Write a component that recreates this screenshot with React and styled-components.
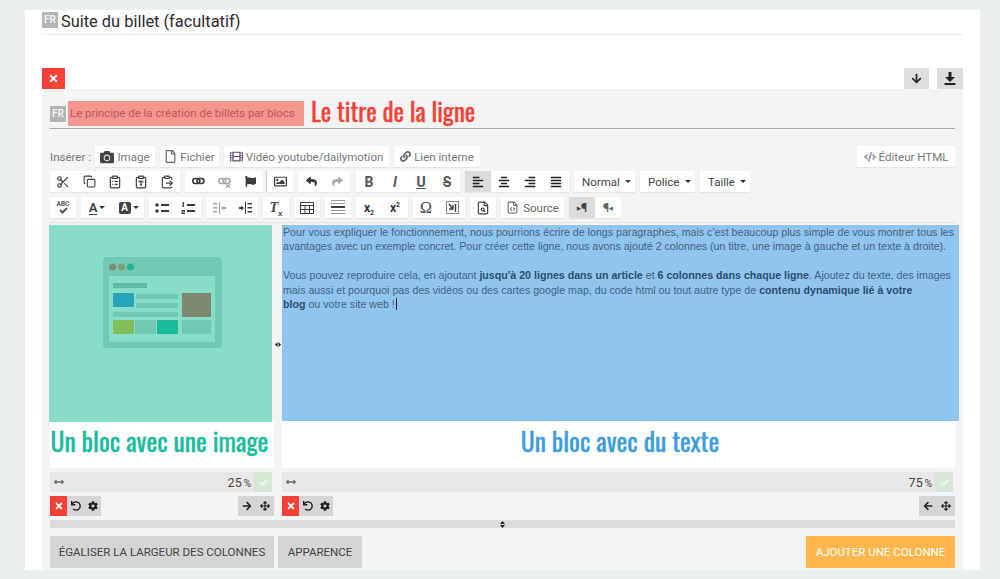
import React from "react";
import styled, { createGlobalStyle } from "styled-components";
import {
  FaTimes, FaArrowDown, FaArrowRight, FaArrowLeft, FaCamera, FaRegFile, FaFilm, FaLink, FaCode,
  FaFlag, FaRegImage, FaReply, FaShare, FaAlignLeft, FaAlignCenter, FaAlignRight, FaAlignJustify,
  FaCheck, FaUndo, FaCog, FaArrowsAlt, FaArrowsAltH,
} from "react-icons/fa";
import { Scissors, Copy, ClipboardList, ClipboardType, ClipboardPaste, FileSearch, FileCode } from "lucide-react";

const GlobalStyle = createGlobalStyle`
  html, body {
    margin: 0;
    padding: 0;
    height: 100%;
    overflow: hidden;
    background: #ebeff0;
    font-family: Roboto, "Liberation Sans", sans-serif;
  }
`;

const Page = styled.div`
  padding-top: 10px;
`;
const Card = styled.div`
  width: 955px;
  height: 560px;
  margin-left: 25px;
  padding: 0 17px;
  box-sizing: border-box;
  background: #fff;
`;
const Heading = styled.div`
  display: flex;
  align-items: flex-start;
  gap: 3px;
  height: 25px;
  padding-top: 2px;
  box-sizing: border-box;
  border-bottom: 1px solid #eaeaea;
  font-size: 16.4px;
  line-height: 19px;
  color: #2b2b2b;
`;
const Flag = styled.span`
  display: inline-flex;
  align-items: center;
  justify-content: center;
  flex: none;
  width: 16px;
  height: 16px;
  background: #b4b4b4;
  color: #f2f2f2;
  font-size: 10px;
  font-weight: 700;
  line-height: 1;
`;
const Actions = styled.div`
  display: flex;
  justify-content: space-between;
  align-items: flex-end;
  margin-top: 33px;
  height: 21px;
`;
const ActionsRight = styled.div`
  display: flex;
  gap: 8px;
`;
const Square = styled.button`
  display: flex;
  align-items: center;
  justify-content: center;
  width: ${(p) => p.$w || 25}px;
  height: 21px;
  padding: 0;
  border: 0;
  background: ${(p) => (p.$danger ? "#f44336" : "#dedede")};
  color: ${(p) => (p.$danger ? "#fff" : "#222")};
  font-size: 11px;
`;
const Panel = styled.div`
  height: 481px;
  padding: 12px 8px 0;
  box-sizing: border-box;
  background: #f4f4f4;
`;
const TitleRow = styled.div`
  display: flex;
  align-items: center;
  height: 25px;
  padding-bottom: 2px;
  border-bottom: 1px solid #aaa;
`;
const TitleInput = styled.div`
  width: 236px;
  height: 25px;
  margin-left: 2px;
  padding-left: 2px;
  box-sizing: border-box;
  background: #f5958f;
  color: #bf5a58;
  font-size: 11.4px;
  line-height: 25px;
  white-space: nowrap;
`;
const Display = styled.span`
  display: inline-block;
  font-family: Oswald, "Liberation Sans Narrow", "DejaVu Sans Condensed", sans-serif;
  font-size: ${(p) => p.$size || 25.6}px;
  line-height: 32px;
  color: ${(p) => p.$color};
  white-space: nowrap;
  -webkit-text-stroke: 0.3px ${(p) => p.$color};
`;
const RedTitle = styled(Display)`
  margin: -6px 0 0 7px;
`;
const InsertRow = styled.div`
  display: flex;
  align-items: center;
  gap: 5px;
  height: 21px;
  margin-top: 17px;
  font-size: 11.5px;
  color: #777;
`;
const InsertLabel = styled.span`
  width: 40px;
  white-space: nowrap;
`;
const InsertBtn = styled.div`
  display: flex;
  align-items: center;
  justify-content: center;
  gap: 3px;
  width: ${(p) => p.$w}px;
  height: 21px;
  margin-left: ${(p) => (p.$auto ? "auto" : "0")};
  background: #fff;
  box-shadow: 0 1px 1px rgba(0, 0, 0, 0.06);
  font-size: 11.5px;
  color: #777;
  svg {
    color: ${(p) => p.$iconColor || "#666"};
    flex: none;
  }
`;
const ToolRow = styled.div`
  display: flex;
  gap: 5px;
  height: 21px;
  margin-top: ${(p) => p.$top}px;
`;
const Group = styled.div`
  display: flex;
  margin-left: ${(p) => p.$shift || 0}px;
  background: #fff;
  box-shadow: 0 1px 1px rgba(0, 0, 0, 0.06);
  border-left: ${(p) => (p.$sep ? "1px solid #ccc" : "0")};
`;
const Tool = styled.div`
  display: flex;
  align-items: center;
  justify-content: center;
  gap: 2px;
  width: ${(p) => p.$w || 26}px;
  height: 21px;
  background: ${(p) => (p.$active ? "#dcdcdc" : "transparent")};
  color: ${(p) => (p.$dim ? "#aaa" : "#3c3c3c")};
  font-size: 12px;
`;
const Caret = styled.span`
  display: inline-block;
  width: 0;
  height: 0;
  border-top: 3px solid #333;
  border-left: 3px solid transparent;
  border-right: 3px solid transparent;
`;
const Combo = styled.div`
  display: flex;
  align-items: center;
  justify-content: space-between;
  width: ${(p) => p.$w}px;
  height: 21px;
  padding: 0 4px 0 8px;
  box-sizing: border-box;
  background: #fff;
  box-shadow: 0 1px 1px rgba(0, 0, 0, 0.06);
  font-size: 11.5px;
  color: #444;
`;
const SourceTool = styled(Tool)`
  width: 63px;
  gap: 4px;
  font-size: 11.5px;
  color: #666;
`;
const LetterA = styled.span`
  font-weight: 700;
  font-size: 13px;
  line-height: 13px;
  color: #444;
  border-bottom: 1px solid #444;
`;
const BoxA = styled.span`
  display: inline-flex;
  align-items: center;
  justify-content: center;
  width: 12px;
  height: 12px;
  border-radius: 2px;
  background: #444;
  color: #fff;
  font-size: 10px;
  font-weight: 700;
`;
const Format = styled.span`
  font-size: 14px;
  font-weight: 700;
  line-height: 1;
  color: #555;
  font-style: ${(p) => (p.$italic ? "italic" : "normal")};
  text-decoration: ${(p) => p.$line || "none"};
`;
const Script = styled.span`
  font-size: 12px;
  font-weight: 700;
  color: #333;
  sub, sup {
    font-size: 7px;
    line-height: 0;
  }
`;
const SpellMark = styled.span`
  display: flex;
  flex-direction: column;
  align-items: center;
  font-size: 6.5px;
  font-weight: 700;
  line-height: 6px;
  color: #555;
`;
const ClearFormat = styled.span`
  font-family: "Liberation Serif", serif;
  font-style: italic;
  font-weight: 700;
  font-size: 14px;
  color: #444;
  sub {
    font-family: "Liberation Sans", sans-serif;
    font-style: normal;
    font-size: 8px;
    line-height: 0;
  }
`;
const Pilcrow = styled.span`
  font-size: 13px;
  font-weight: 700;
  color: ${(p) => p.$color || "#444"};
  i {
    font-size: 5px;
    font-style: normal;
    vertical-align: 2px;
  }
`;
const Omega = styled.span`
  font-family: "Liberation Serif", serif;
  font-size: 16px;
  color: #444;
`;
const Divider = styled.div`
  height: 1px;
  margin-top: 4px;
  background: #e4e4e4;
`;
const Columns = styled.div`
  display: flex;
  margin-left: -1px;
  margin-top: 2px;
`;
const Column = styled.div`
  display: flex;
  flex-direction: column;
  flex: none;
  width: ${(p) => p.$w}px;
`;
const Gutter = styled.div`
  flex: none;
  display: flex;
  align-items: flex-start;
  justify-content: center;
  width: 8px;
  padding-top: 117px;
  color: #222;
`;
const ImageBlock = styled.div`
  display: flex;
  align-items: center;
  justify-content: center;
  width: 223px;
  height: 197px;
  padding: 0 0 42px 4px;
  box-sizing: border-box;
  background: #87ddc8;
`;
const TextBlock = styled.div`
  height: 196px;
  padding: 0 3px 0 1px;
  box-sizing: border-box;
  background: #8fc5ee;
  font-family: "Liberation Sans", Arial, sans-serif;
  font-size: 10.65px;
  line-height: 14.4px;
  color: #3f6385;
  b {
    color: #2a4d70;
  }
`;
const Cursor = styled.span`
  display: inline-block;
  width: 1px;
  height: 12px;
  margin-left: 1px;
  vertical-align: -2px;
  background: #222;
`;
const Caption = styled.div`
  display: flex;
  justify-content: center;
  align-items: center;
  height: ${(p) => p.$h}px;
  margin-left: ${(p) => p.$left || 0}px;
  width: ${(p) => p.$w}px;
  padding: 0 ${(p) => p.$padRight || 0}px 10px ${(p) => p.$pad || 0}px;
  box-sizing: border-box;
  background: #fff;
`;
const SizeBar = styled.div`
  display: flex;
  align-items: center;
  width: ${(p) => p.$w}px;
  height: 20px;
  margin-top: 4px;
  margin-left: ${(p) => p.$left || 0}px;
  padding-left: 4px;
  box-sizing: border-box;
  background: #e8e8e8;
  font-size: 12.5px;
  color: #444;
  > svg {
    color: #666;
  }
`;
const Percent = styled.span`
  margin-left: auto;
  margin-right: 3px;
  small {
    font-size: 10px;
    margin-left: 2px;
  }
`;
const Apply = styled.span`
  display: flex;
  align-items: center;
  justify-content: center;
  width: 18px;
  height: 20px;
  background: #d5e8d4;
  color: #f2f7f1;
  font-size: 9px;
`;
const BlockTools = styled.div`
  display: flex;
  justify-content: space-between;
  width: ${(p) => p.$w}px;
  height: 20px;
  margin-top: 4px;
  margin-left: ${(p) => p.$left || 0}px;
`;
const ToolSet = styled.div`
  display: flex;
  background: #d5d5d5;
`;
const MiniBtn = styled.span`
  display: flex;
  align-items: center;
  justify-content: center;
  width: ${(p) => p.$w || 17}px;
  height: 20px;
  background: ${(p) => (p.$danger ? "#f44336" : "transparent")};
  color: ${(p) => (p.$danger ? "#fff" : "#222")};
  font-size: 10px;
`;
const RowHandle = styled.div`
  display: flex;
  align-items: center;
  justify-content: center;
  height: 8px;
  margin-top: 4px;
  background: #dcdcdc;
  color: #222;
`;
const Footer = styled.div`
  display: flex;
  gap: 4px;
  margin-top: 8px;
`;
const FooterBtn = styled.button`
  width: ${(p) => p.$w}px;
  height: 32px;
  margin-left: ${(p) => (p.$auto ? "auto" : "0")};
  padding: 0;
  border: 0;
  background: ${(p) => (p.$accent ? "#ffb74d" : "#d5d5d5")};
  color: ${(p) => (p.$accent ? "#fff" : "#444")};
  font-family: Roboto, sans-serif;
  font-size: 11.5px;
  text-transform: uppercase;
`;

const DownloadIcon = () => (
  <svg width="12" height="13" viewBox="0 0 12 13" fill="currentColor">
    <path d="M4.500 0h3v5H11L6 10 1 5h3.500z" />
    <rect x="0.500" y="11" width="11" height="2" />
  </svg>
);

const Svg14 = ({ children, w = 14, h = 14 }) => (
  <svg width={w} height={h} viewBox={`0 0 ${w} ${h}`} fill="currentColor">
    {children}
  </svg>
);

const RuleIcon = () => (
  <Svg14 h={15}>
    <rect y="0" width="14" height="1" opacity="0.55" />
    <rect y="3" width="14" height="1" opacity="0.55" />
    <rect y="6" width="14" height="2" />
    <rect y="10" width="14" height="1" opacity="0.55" />
    <rect y="13" width="14" height="1" opacity="0.55" />
  </Svg14>
);

const ChainIcon = ({ broken }) => (
  <svg width="13" height="13" viewBox="0 0 13 13" fill="none" stroke="currentColor" strokeWidth="1.600">
    <rect x="0.800" y="3.500" width="7" height="5" rx="2.500" />
    <rect x="5" y="3.500" width="7" height="5" rx="2.500" />
    {broken && <path d="M8 9l4 4M12 9l-4 4" strokeWidth="1.200" />}
  </svg>
);

const BulletIcon = () => (
  <Svg14 h={10}>
    <circle cx="2" cy="2" r="1.800" />
    <circle cx="2" cy="8" r="1.800" />
    <rect x="6" y="1" width="8" height="2" />
    <rect x="6" y="7" width="8" height="2" />
  </Svg14>
);

const NumberIcon = () => (
  <Svg14 h={12}>
    <rect x="1.500" y="0" width="1.400" height="5" />
    <path d="M0.500 8h3.500v2H2v.8h2V12H0.500v-2.600h2v-.4H.5z" />
    <rect x="6" y="2" width="8" height="2" />
    <rect x="6" y="8" width="8" height="2" />
  </Svg14>
);

const IndentIcon = ({ flip }) => (
  <Svg14 w={13} h={12}>
    <g transform={flip ? "translate(13 0) scale(-1 1)" : undefined}>
      <path d="M0 5h2.500V3.500L5 6 2.500 8.500V7H0z" />
      <rect x="6" y="0" width="1" height="12" />
      <rect x="8.500" y="1" width="4.500" height="1.500" />
      <rect x="8.500" y="5" width="4.500" height="1.500" />
      <rect x="8.500" y="9" width="4.500" height="1.500" />
    </g>
  </Svg14>
);

const GridIcon = () => (
  <svg width="14" height="12" viewBox="0 0 14 12" fill="none" stroke="currentColor" strokeWidth="1">
    <rect x="0.500" y="0.500" width="13" height="11" />
    <path d="M0 3.500h14M0 7.500h14M5 3v9M9.500 3v9" />
  </svg>
);

const FrameIcon = () => (
  <svg width="13" height="13" viewBox="0 0 13 13" fill="none" stroke="currentColor" strokeWidth="1">
    <rect x="0.500" y="0.500" width="12" height="12" opacity="0.6" />
    <path d="M3 3l4 5M7 4v4H3" strokeWidth="1.400" />
    <path d="M9.500 3v8" strokeWidth="1.400" />
  </svg>
);

const CheckMark = () => (
  <svg width="12" height="7" viewBox="0 0 12 7" fill="none" stroke="currentColor" strokeWidth="2">
    <path d="M3 3l2.500 2.500L10 1" />
  </svg>
);

const HandleH = () => (
  <svg width="6" height="5" viewBox="0 0 6 5" fill="currentColor">
    <path d="M0 2.500L2.500 0v5zM6 2.500L3.500 0v5z" />
  </svg>
);

const HandleV = () => (
  <svg width="5" height="7" viewBox="0 0 5 7" fill="currentColor">
    <path d="M2.500 0L5 3H0zM2.500 7L0 4h5z" />
  </svg>
);

const Illustration = () => (
  <svg width="119" height="91" viewBox="0 0 119 91">
    <rect width="119" height="91" rx="4" fill="#72c9b5" />
    <rect x="6" y="19" width="106" height="66" fill="#87ddc8" rx="1" />
    <circle cx="9.500" cy="10" r="3.500" fill="#7f8e73" />
    <circle cx="18.500" cy="10" r="3.500" fill="#8b9a6c" />
    <circle cx="27.500" cy="10" r="3.500" fill="#1fb495" />
    <rect x="10" y="26" width="34" height="5" fill="#5dbba5" />
    <rect x="10" y="36" width="21" height="14" fill="#27a6bb" />
    <rect x="33" y="37" width="42" height="5" fill="#72c9b5" />
    <rect x="33" y="46" width="42" height="5" fill="#72c9b5" />
    <rect x="10" y="55" width="65" height="5" fill="#72c9b5" />
    <rect x="79" y="36" width="29" height="24" fill="#7e8872" />
    <rect x="10" y="63" width="21" height="14" fill="#83bf58" />
    <rect x="32" y="63" width="21" height="14" fill="#72c9b5" />
    <rect x="54" y="63" width="21" height="14" fill="#1abc9c" />
    <rect x="79" y="63" width="29" height="14" fill="#72c9b5" />
  </svg>
);

const row1 = [
  { items: [[<Scissors size={14} />], [<Copy size={13} />], [<ClipboardList size={14} />], [<ClipboardType size={14} />], [<ClipboardPaste size={14} />]] },
  { items: [[<ChainIcon />], [<ChainIcon broken />, { dim: true }], [<FaFlag size={11} />]] },
  { shift: -2, sep: true, items: [[<FaRegImage size={13} />]] },
  { items: [[<FaReply size={11} />], [<FaShare size={11} />, { dim: true }]] },
  { shift: 1, items: [[<Format>B</Format>], [<Format $italic>I</Format>], [<Format $line="underline">U</Format>], [<Format $line="line-through">S</Format>]] },
  { items: [[<FaAlignLeft size={12} color="#222" />, { active: true }], [<FaAlignCenter size={12} color="#222" />], [<FaAlignRight size={12} color="#222" />], [<FaAlignJustify size={12} color="#222" />]] },
];
const row2a = [
  { items: [[<SpellMark>ABC<CheckMark /></SpellMark>]] },
];
const row2b = [
  { items: [[<BulletIcon />], [<NumberIcon />]] },
  { items: [[<IndentIcon flip />, { dim: true }], [<IndentIcon />]] },
  { items: [[<ClearFormat>T<sub>x</sub></ClearFormat>]] },
  { items: [[<GridIcon />]] },
  { items: [[<RuleIcon />]] },
  { items: [[<Script>x<sub>2</sub></Script>], [<Script>x<sup>2</sup></Script>]] },
  { items: [[<Omega>Ω</Omega>], [<FrameIcon />]] },
  { items: [[<FileSearch size={14} />]] },
];

const renderGroups = (groups) =>
  groups.map((group, g) => (
    <Group key={g} $shift={group.shift} $sep={group.sep}>
      {group.items.map(([icon, opts = {}], i) => (
        <Tool key={i} $active={opts.active} $dim={opts.dim}>
          {icon}
        </Tool>
      ))}
    </Group>
  ));

export default function App() {
  return (
    <Page>
      <GlobalStyle />
      <Card>
        <Heading>
          <Flag>FR</Flag>
          <span>Suite du billet (facultatif)</span>
        </Heading>
        <Actions>
          <Square $danger $w={23}><FaTimes /></Square>
          <ActionsRight>
            <Square><FaArrowDown /></Square>
            <Square $w={26}><DownloadIcon /></Square>
          </ActionsRight>
        </Actions>
        <Panel>
          <TitleRow>
            <Flag>FR</Flag>
            <TitleInput>Le principe de la création de billets par blocs</TitleInput>
            <RedTitle $color="#f44336" $size={25}>Le titre de la ligne</RedTitle>
          </TitleRow>
          <InsertRow>
            <InsertLabel>Insérer :</InsertLabel>
            <InsertBtn $w={60} $iconColor="#444"><FaCamera size={14} />Image</InsertBtn>
            <InsertBtn $w={59}><FaRegFile size={13} />Fichier</InsertBtn>
            <InsertBtn $w={165} $iconColor="#6b4a7a"><FaFilm size={13} />Vidéo youtube/dailymotion</InsertBtn>
            <InsertBtn $w={86}><FaLink size={11} />Lien interne</InsertBtn>
            <InsertBtn $w={98} $auto $iconColor="#999"><FaCode size={12} />Éditeur HTML</InsertBtn>
          </InsertRow>
          <ToolRow $top={4}>
            {renderGroups(row1)}
            <Combo $w={61}>Normal<Caret /></Combo>
            <Combo $w={55}>Police<Caret /></Combo>
            <Combo $w={50}>Taille<Caret /></Combo>
          </ToolRow>
          <ToolRow $top={5}>
            {renderGroups(row2a)}
            <Group>
              <Tool $w={32}><LetterA>A</LetterA><Caret /></Tool>
              <Tool $w={31}><BoxA>A</BoxA><Caret /></Tool>
            </Group>
            {renderGroups(row2b)}
            <Group>
              <SourceTool><FileCode size={13} />Source</SourceTool>
            </Group>
            <Group>
              <Tool $active><Pilcrow><i>▶</i>¶</Pilcrow></Tool>
              <Tool><Pilcrow $color="#666">¶<i>◀</i></Pilcrow></Tool>
            </Group>
          </ToolRow>
          <Divider />
          <Columns>
            <Column $w={225}>
              <ImageBlock><Illustration /></ImageBlock>
              <Caption $left={1} $w={224} $h={46} $padRight={5}>
                <Display $color="#1abc9c">Un bloc avec une image</Display>
              </Caption>
              <SizeBar $left={1} $w={222}>
                <FaArrowsAltH size={10} />
                <Percent>25<small>%</small></Percent>
                <Apply><FaCheck /></Apply>
              </SizeBar>
              <BlockTools $left={1} $w={224}>
                <ToolSet>
                  <MiniBtn $danger><FaTimes /></MiniBtn>
                  <MiniBtn><FaUndo /></MiniBtn>
                  <MiniBtn><FaCog /></MiniBtn>
                </ToolSet>
                <ToolSet>
                  <MiniBtn $w={18}><FaArrowRight /></MiniBtn>
                  <MiniBtn $w={18}><FaArrowsAlt /></MiniBtn>
                </ToolSet>
              </BlockTools>
            </Column>
            <Gutter><HandleH /></Gutter>
            <Column $w={677}>
              <TextBlock>
                Pour vous expliquer le fonctionnement, nous pourrions écrire de longs paragraphes, mais c'est beaucoup plus simple de vous montrer tous les avantages avec un exemple concret. Pour créer cette ligne, nous avons ajouté 2 colonnes (un titre, une image à gauche et un texte à droite).
                <br />
                <br />
                Vous pouvez reproduire cela, en ajoutant <b>jusqu'à 20 lignes dans un article</b> et <b>6 colonnes dans chaque ligne</b>. Ajoutez du texte, des images mais aussi et pourquoi pas des vidéos ou des cartes google map, du code html ou tout autre type de <b>contenu dynamique lié à votre</b>
                <br />
                <b>blog</b> ou votre site web !<Cursor />
              </TextBlock>
              <Caption $w={673} $h={47} $pad={3}>
                <Display $color="#3b9ddd">Un bloc avec du texte</Display>
              </Caption>
              <SizeBar $w={671}>
                <FaArrowsAltH size={10} />
                <Percent>75<small>%</small></Percent>
                <Apply><FaCheck /></Apply>
              </SizeBar>
              <BlockTools $w={673}>
                <ToolSet>
                  <MiniBtn $danger><FaTimes /></MiniBtn>
                  <MiniBtn><FaUndo /></MiniBtn>
                  <MiniBtn><FaCog /></MiniBtn>
                </ToolSet>
                <ToolSet>
                  <MiniBtn $w={18}><FaArrowLeft /></MiniBtn>
                  <MiniBtn $w={18}><FaArrowsAlt /></MiniBtn>
                </ToolSet>
              </BlockTools>
            </Column>
          </Columns>
          <RowHandle><HandleV /></RowHandle>
          <Footer>
            <FooterBtn $w={224}>Égaliser la largeur des colonnes</FooterBtn>
            <FooterBtn $w={84}>Apparence</FooterBtn>
            <FooterBtn $w={149} $auto $accent>Ajouter une colonne</FooterBtn>
          </Footer>
        </Panel>
      </Card>
    </Page>
  );
}
